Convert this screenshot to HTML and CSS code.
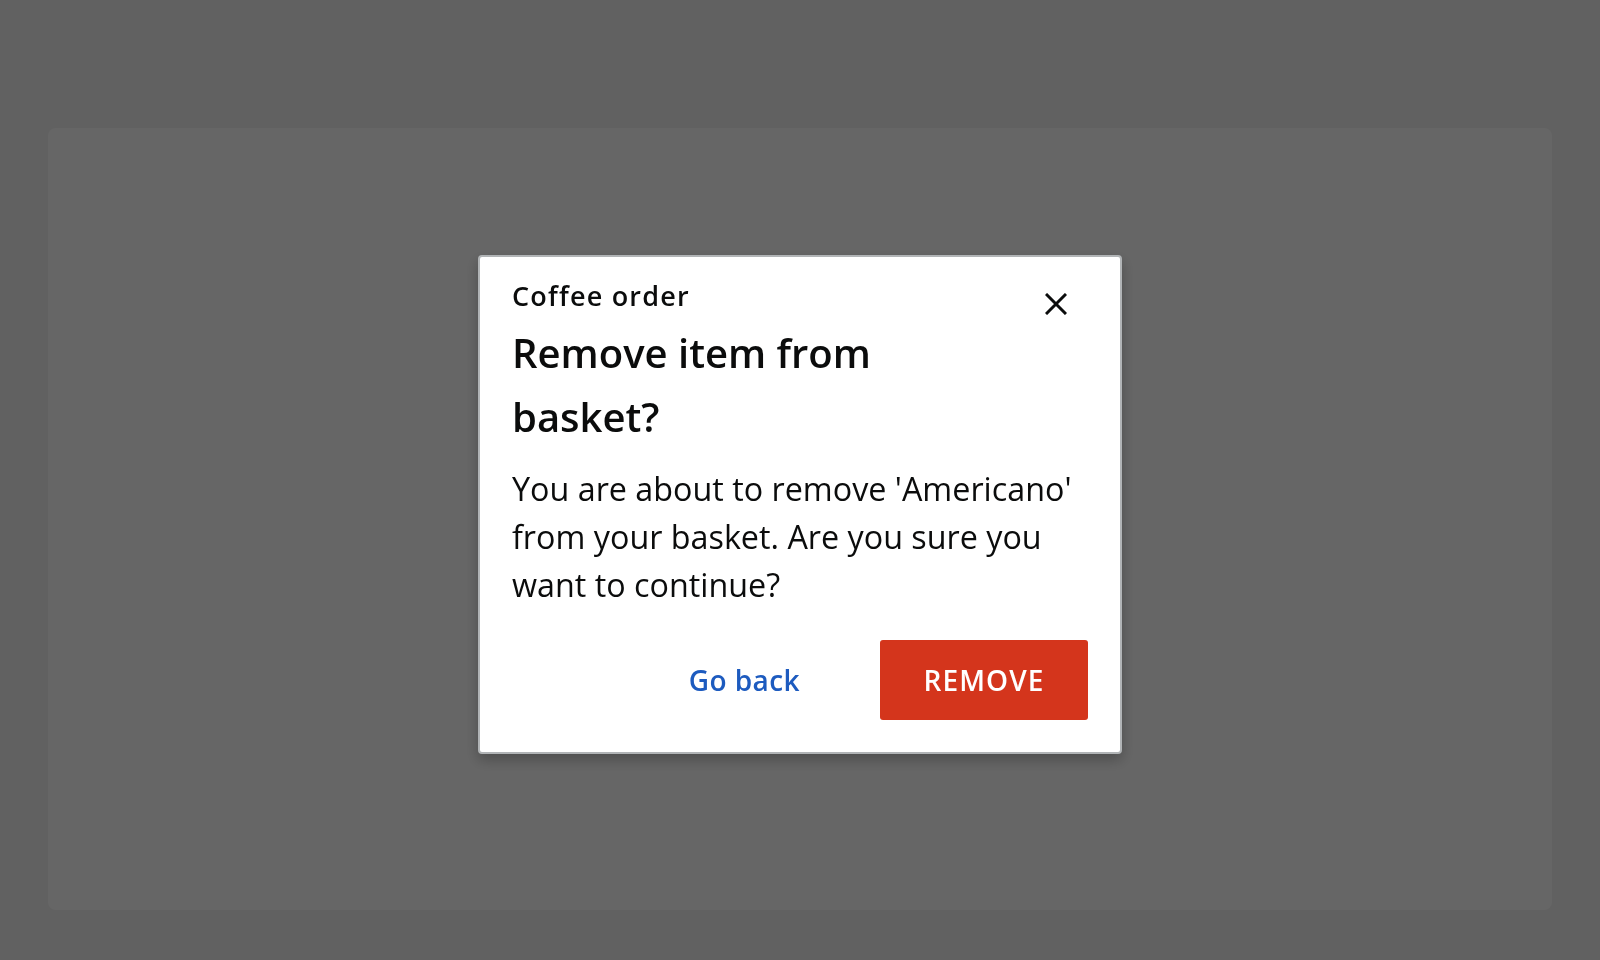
FILE: index.html
```html
<!DOCTYPE html>
<html lang="en">
<head>
<meta charset="utf-8">
<title>Coffee order</title>
<link rel="stylesheet" href="styles.css">
</head>
<body>
<main class="page">
  <div class="panel"></div>
</main>
<div class="overlay">
  <div class="dialog" role="dialog" aria-modal="true" aria-labelledby="dlg-title">
    <div class="dialog-header">
      <div class="dialog-titles">
        <p class="dialog-caption">Coffee order</p>
        <h2 class="dialog-title" id="dlg-title">Remove item from basket?</h2>
      </div>
      <button class="close-btn" type="button" aria-label="Close">
        <svg width="22" height="22" viewBox="0 0 22 22" aria-hidden="true">
          <path d="M1 1 L21 21 M21 1 L1 21" stroke="#0b0c0c" stroke-width="3" fill="none"/>
        </svg>
      </button>
    </div>
    <p class="dialog-body">You are about to remove 'Americano' from your basket. Are you sure you want to continue?</p>
    <div class="dialog-actions">
      <button class="btn btn-link" type="button">Go back</button>
      <button class="btn btn-danger" type="button">REMOVE</button>
    </div>
  </div>
</div>
</body>
</html>
```
FILE: styles.css
```css
* { box-sizing: border-box; }

html, body {
  margin: 0;
  height: 100%;
}

body {
  background: #f3f3f3;
  font-family: "Open Sans", "Noto Sans", sans-serif;
  color: #0b0c0c;
}

.page {
  padding: 128px 48px 50px;
  height: 100%;
}

.panel {
  height: 782px;
  background: #ffffff;
  border-radius: 8px;
}

.overlay {
  position: fixed;
  inset: 0;
  background: rgba(0, 0, 0, 0.6);
  display: flex;
  justify-content: center;
  align-items: flex-start;
  padding-top: 255px;
}

.dialog {
  width: 644px;
  background: #ffffff;
  border: 2px solid #b1b4b6;
  border-radius: 4px;
  padding: 21px 32px 32px;
  box-shadow: 0 6px 14px rgba(0, 0, 0, 0.25);
}

.dialog-header {
  display: flex;
  align-items: flex-start;
}

.dialog-titles {
  flex: 1;
}

.dialog-caption {
  margin: 0;
  font-size: 27px;
  line-height: 36px;
  font-weight: 600;
  letter-spacing: 1.2px;
}

.dialog-title {
  margin: 7px 0 0;
  max-width: 440px;
  font-size: 40px;
  line-height: 64px;
  font-weight: 600;
}

.close-btn {
  width: 64px;
  height: 64px;
  margin-top: -6px;
  padding: 0;
  border: 0;
  background: transparent;
  display: flex;
  align-items: center;
  justify-content: center;
  cursor: pointer;
}

.close-btn svg { display: block; }

.dialog-body {
  margin: 15px 0 0;
  font-size: 32.3px;
  line-height: 48px;
  font-weight: 400;
}

.dialog-actions {
  margin-top: 32px;
  display: flex;
  justify-content: flex-end;
  gap: 40px;
}

.btn {
  height: 80px;
  border: 0;
  border-radius: 3px;
  font-family: inherit;
  font-size: 28px;
  font-weight: 600;
  letter-spacing: 0.04em;
  cursor: pointer;
}

.btn-link {
  padding: 0 40px;
  background: transparent;
  color: #1d5bbf;
  letter-spacing: 0.015em;
}

.btn-danger {
  width: 208px;
  padding: 0;
  background: #d4351c;
  color: #ffffff;
}
```
